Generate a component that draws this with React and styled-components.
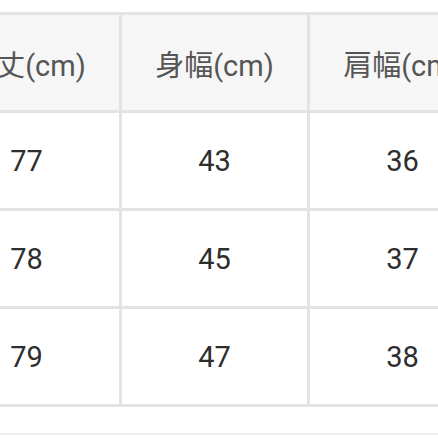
import styled, { createGlobalStyle } from "styled-components";

const GlobalStyle = createGlobalStyle`
  body {
    margin: 0;
    background: #ffffff;
  }
`;

const rows = [
  ["77", "43", "36"],
  ["78", "45", "37"],
  ["79", "47", "38"],
];

const headers = ["着丈(cm)", "身幅(cm)", "肩幅(cm)"];

const App = () => {
  return (
    <Page>
      <GlobalStyle />
      <SizeTable>
        {headers.map((h) => (
          <Cell key={h} $head>
            {h}
          </Cell>
        ))}
        {rows.map((row, i) =>
          row.map((v, j) => <Cell key={`${i}-${j}`}>{v}</Cell>)
        )}
      </SizeTable>
      <Divider />
    </Page>
  );
};

export default App;

const Page = styled.div`
  width: 438px;
  height: 438px;
  overflow: hidden;
  padding-top: 12px;
  box-sizing: border-box;
  background: #ffffff;
`;

const SizeTable = styled.div`
  display: grid;
  grid-template-columns: repeat(3, 185px);
  grid-auto-rows: 95px;
  gap: 3px;
  width: max-content;
  margin-left: -69px;
  border: 3px solid #e3e3e3;
  background-color: #e3e3e3;
`;

const Cell = styled.div`
  display: flex;
  align-items: center;
  justify-content: center;
  background-color: ${(p) => (p.$head ? "#f6f6f6" : "#ffffff")};
  color: ${(p) => (p.$head ? "#555555" : "#2e2e2e")};
  font-family: Roboto, "Noto Sans CJK JP", sans-serif;
  font-size: 29px;
  white-space: nowrap;
`;

const Divider = styled.div`
  margin-top: 26px;
  height: 2px;
  background-color: #eeeeee;
`;
